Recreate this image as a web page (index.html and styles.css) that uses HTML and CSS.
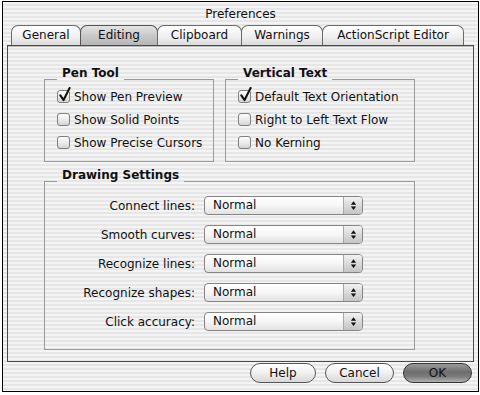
FILE: index.html
```html
<!DOCTYPE html>
<html lang="en">
  <head>
    <meta charset="UTF-8" />
    <title>Preferences</title>
    <link rel="stylesheet" href="styles.css">
  </head>
  <body>
    <div class="window">
      <div class="titlebar">Preferences</div>

      <div class="tabs">
        <div class="tab tab-general">General</div>
        <div class="tab tab-editing selected">Editing</div>
        <div class="tab tab-clipboard">Clipboard</div>
        <div class="tab tab-warnings">Warnings</div>
        <div class="tab tab-as">ActionScript Editor</div>
      </div>

      <div class="panel">
        <div class="top-row">
          <fieldset class="group pen-tool">
            <legend>Pen Tool</legend>
            <label class="check-row"><span class="check checked"><svg viewBox="0 0 14 16"><path d="M2.5 9 L6 14 L12.5 1" fill="none" stroke="#111" stroke-width="2.2" stroke-linecap="round" stroke-linejoin="round"/></svg></span>Show Pen Preview</label>
            <label class="check-row"><span class="check"></span>Show Solid Points</label>
            <label class="check-row"><span class="check"></span>Show Precise Cursors</label>
          </fieldset>

          <fieldset class="group vertical-text">
            <legend>Vertical Text</legend>
            <label class="check-row"><span class="check checked"><svg viewBox="0 0 14 16"><path d="M2.5 9 L6 14 L12.5 1" fill="none" stroke="#111" stroke-width="2.2" stroke-linecap="round" stroke-linejoin="round"/></svg></span>Default Text Orientation</label>
            <label class="check-row"><span class="check"></span>Right to Left Text Flow</label>
            <label class="check-row"><span class="check"></span>No Kerning</label>
          </fieldset>
        </div>

        <fieldset class="group drawing">
          <legend>Drawing Settings</legend>
          <div class="settings">
            <span class="setting-label">Connect lines:</span>
            <div class="popup"><span class="popup-value">Normal</span><span class="popup-arrows"><svg viewBox="0 0 8 12"><path d="M4 1 L7 5 L1 5 Z M4 11 L7 7 L1 7 Z" fill="#111"/></svg></span></div>

            <span class="setting-label">Smooth curves:</span>
            <div class="popup"><span class="popup-value">Normal</span><span class="popup-arrows"><svg viewBox="0 0 8 12"><path d="M4 1 L7 5 L1 5 Z M4 11 L7 7 L1 7 Z" fill="#111"/></svg></span></div>

            <span class="setting-label">Recognize lines:</span>
            <div class="popup"><span class="popup-value">Normal</span><span class="popup-arrows"><svg viewBox="0 0 8 12"><path d="M4 1 L7 5 L1 5 Z M4 11 L7 7 L1 7 Z" fill="#111"/></svg></span></div>

            <span class="setting-label">Recognize shapes:</span>
            <div class="popup"><span class="popup-value">Normal</span><span class="popup-arrows"><svg viewBox="0 0 8 12"><path d="M4 1 L7 5 L1 5 Z M4 11 L7 7 L1 7 Z" fill="#111"/></svg></span></div>

            <span class="setting-label">Click accuracy:</span>
            <div class="popup"><span class="popup-value">Normal</span><span class="popup-arrows"><svg viewBox="0 0 8 12"><path d="M4 1 L7 5 L1 5 Z M4 11 L7 7 L1 7 Z" fill="#111"/></svg></span></div>
          </div>
        </fieldset>
      </div>

      <div class="buttons">
        <button class="btn btn-help">Help</button>
        <button class="btn btn-cancel">Cancel</button>
        <button class="btn btn-ok">OK</button>
      </div>
    </div>
  </body>
</html>
```

FILE: styles.css
```css
* {
  margin: 0;
  padding: 0;
  box-sizing: border-box;
}

body {
  font-family: "DejaVu Sans", "Liberation Sans", sans-serif;
  font-size: 12px;
  color: #111;
  background: #ffffff;
  width: 480px;
  height: 395px;
  padding: 1px 0 0 2px;
}

.window {
  width: 477px;
  height: 391px;
  border: 1px solid #000;
  background: repeating-linear-gradient(
    to bottom,
    #f4f4f4 0px,
    #f4f4f4 2px,
    #e6e6e6 2px,
    #e6e6e6 4px
  );
  display: flex;
  flex-direction: column;
}

.titlebar {
  height: 23px;
  line-height: 25px;
  text-align: center;
  font-size: 12px;
  color: #111;
}

/* tabs */
.tabs {
  display: flex;
  height: 20px;
  padding-left: 8px;
}

.tab {
  height: 20px;
  line-height: 19px;
  text-align: center;
  border: 1px solid #6a6a6a;
  border-bottom: none;
  border-radius: 7px 7px 0 0;
  background: linear-gradient(to bottom, #ffffff 0%, #f0f0f0 55%, #dcdcdc 100%);
  margin-right: -1px;
  font-size: 12px;
}

.tab-general { width: 70px; }
.tab-editing { width: 78px; }
.tab-clipboard { width: 85px; }
.tab-warnings { width: 82px; }
.tab-as { width: 142px; }

.tab.selected {
  background: linear-gradient(to bottom, #e4e4e4 0%, #c9c9c9 50%, #b6b6b6 100%);
  border-color: #555;
}

/* panel */
.panel {
  margin: 0 4px;
  height: 317px;
  border: 1px solid #4a4a4a;
  box-shadow: inset 0 1px 0 #bbbbbb;
  padding: 26px 0 0 36px;
}

.top-row {
  display: flex;
  gap: 11px;
}

.group {
  border: 1px solid #9a9a9a;
  padding: 0 0 6px 12px;
}

/* title sits on the line, shifted up so the line meets its baseline */
.group legend {
  position: relative;
  top: -6px;
  font-weight: bold;
  font-size: 12px;
  line-height: 14px;
  padding: 0 5px;
}

.pen-tool { width: 170px; }
.vertical-text { width: 190px; }

.check-row {
  display: flex;
  align-items: center;
  height: 23px;
  gap: 4px;
  white-space: nowrap;
  margin-top: -1px;
  margin-bottom: 1px;
}

.check {
  position: relative;
  width: 13px;
  height: 13px;
  border: 1px solid #808080;
  border-radius: 3px;
  background: linear-gradient(to bottom, #fdfdfd 0%, #e8e8e8 60%, #d4d4d4 100%);
  flex: none;
}

.check svg {
  position: absolute;
  left: 0px;
  top: -4px;
  width: 13px;
  height: 15px;
}

/* drawing settings */
.drawing {
  width: 371px;
  margin-top: 12px;
  padding: 3px 0 13px 12px;
}

.settings {
  display: grid;
  grid-template-columns: 138px 159px;
  grid-auto-rows: 29px;
  column-gap: 9px;
  align-items: center;
}

.setting-label {
  text-align: right;
  white-space: nowrap;
}

.popup {
  display: flex;
  height: 19px;
  border: 1px solid #858585;
  border-radius: 4px;
  background: linear-gradient(to bottom, #ffffff 0%, #f6f6f6 50%, #e2e2e2 100%);
  overflow: hidden;
}

.popup-value {
  flex: 1;
  line-height: 17px;
  padding-left: 8px;
}

.popup-arrows {
  width: 19px;
  border-left: 1px solid #a8a8a8;
  background: linear-gradient(to bottom, #f2f2f2 0%, #dadada 50%, #c4c4c4 100%);
  display: flex;
  align-items: center;
  justify-content: center;
}

.popup-arrows svg {
  width: 7px;
  height: 11px;
}

/* buttons */
.buttons {
  display: flex;
  justify-content: flex-end;
  gap: 9px;
  padding: 1px 6px 0 0;
}

.btn {
  height: 20px;
  border: 1px solid #555;
  border-radius: 10px;
  font-family: "DejaVu Sans", "Liberation Sans", sans-serif;
  font-size: 12px;
  color: #111;
  background: linear-gradient(to bottom, #ffffff 0%, #f2f2f2 45%, #d8d8d8 100%);
}

.btn-help { width: 66px; }
.btn-cancel { width: 69px; }

.btn-ok {
  width: 69px;
  border-color: #333;
  background: linear-gradient(to bottom, #9a9a9a 0%, #6e6e6e 45%, #7c7c7c 70%, #b0b0b0 100%);
}
```
